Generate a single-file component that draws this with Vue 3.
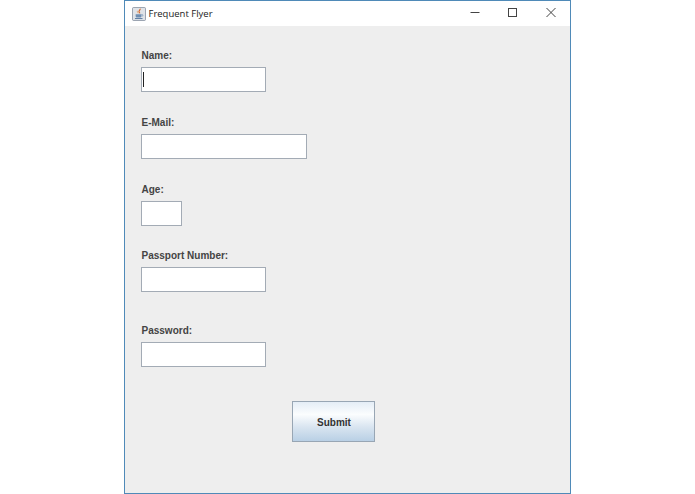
<template>
  <div class="page">
    <div class="window">
      <div class="titlebar">
        <svg class="app-icon" width="14" height="14" viewBox="0 0 16 16">
          <rect x="0.5" y="0.5" width="15" height="15" rx="1.5" fill="#dfe3e8" stroke="#8a95a3" />
          <path d="M9 2c1.2 1.5-2 2.4-.8 4 .3.4.7.8.5 1.3" fill="none" stroke="#d8692c" stroke-width="1.4" />
          <path d="M6.4 4.4c-.8 1 .4 1.7.6 2.8" fill="none" stroke="#e39a5a" stroke-width="0.9" />
          <path d="M4.2 8.4h6.6v2.2c0 1-.9 1.5-1.6 1.5H5.8c-.8 0-1.6-.5-1.6-1.5z" fill="#6f8fb3" />
          <path d="M10.8 8.8h1.2c.9 0 .9 1.6-.9 1.7" fill="none" stroke="#6f8fb3" stroke-width="0.8" />
          <path d="M3.4 13.2h8.6" stroke="#56789f" stroke-width="1.1" />
        </svg>
        <span class="title">Frequent Flyer</span>
        <div class="controls">
          <svg width="38" height="25" viewBox="0 0 38 25"><path d="M14.5 11.5h9" stroke="#444" stroke-width="1" /></svg>
          <svg width="38" height="25" viewBox="0 0 38 25"><rect x="14.5" y="7.5" width="8" height="8" fill="none" stroke="#444" stroke-width="1" /></svg>
          <svg width="38" height="25" viewBox="0 0 38 25"><path d="M14.5 7l9 9M23.5 7l-9 9" stroke="#444" stroke-width="1" fill="none" /></svg>
        </div>
      </div>

      <form class="form" @submit.prevent>
        <div v-for="f in fields" :key="f.label" class="field" :class="f.cls">
          <label class="label">{{ f.label }}</label>
          <div class="input" :style="{ width: f.width + 'px' }">
            <span v-if="f.caret" class="caret"></span>
          </div>
        </div>
        <div class="actions">
          <button class="submit" type="button">Submit</button>
        </div>
      </form>
    </div>
  </div>
</template>

<script setup>
const fields = [
  { label: 'Name:', width: 125, caret: true },
  { label: 'E-Mail:', width: 166 },
  { label: 'Age:', width: 41, cls: 'tight' },
  { label: 'Passport Number:', width: 125 },
  { label: 'Password:', width: 125, cls: 'wide-gap' },
];
</script>

<style>
html, body {
  margin: 0;
  background: #fff;
}
</style>

<style scoped>
.page {
  width: 695px;
  height: 494px;
  display: flex;
  justify-content: center;
  box-sizing: border-box;
  padding-right: 1px;
  background: #fff;
  font-family: "Liberation Sans", Arial, sans-serif;
}

.window {
  width: 447px;
  height: 494px;
  box-sizing: border-box;
  border: 1px solid #4f8ab8;
  background: #eeeeee;
  display: flex;
  flex-direction: column;
}

.titlebar {
  height: 25px;
  background: #fff;
  display: flex;
  align-items: center;
  padding-left: 7px;
  flex-shrink: 0;
}

.app-icon {
  margin-right: 3px;
}

.title {
  font-family: "Open Sans", "Liberation Sans", sans-serif;
  font-size: 9.5px;
  color: #222;
}

.controls {
  margin-left: auto;
  display: flex;
}

.form {
  padding: 23px 0 0 16px;
  flex: 1;
}

.field {
  margin-bottom: 24px;
}

.field.tight {
  margin-bottom: 23px;
}

.field.wide-gap {
  margin-top: 32px;
}

.label {
  display: block;
  font-size: 10px;
  font-weight: 700;
  line-height: 14px;
  color: #444;
  margin: 0 0 4px 1px;
}

.input {
  height: 25px;
  box-sizing: border-box;
  background: #fff;
  border: 1px solid #a3abb5;
  position: relative;
}

.caret {
  position: absolute;
  left: 1px;
  top: 4px;
  width: 1px;
  height: 15px;
  background: #222;
}

.actions {
  padding-left: 151px;
  margin-top: 34px;
}

.submit {
  width: 83px;
  height: 41px;
  display: block;
  border: 1px solid #98a6b4;
  background: linear-gradient(to bottom, #e4edf6 0%, #fbfdfe 32%, #d8e4f0 65%, #b9d0e5 100%);
  font-family: "Liberation Sans", Arial, sans-serif;
  font-size: 10px;
  font-weight: 700;
  color: #333;
  padding: 1px 0 0 2px;
}
</style>
